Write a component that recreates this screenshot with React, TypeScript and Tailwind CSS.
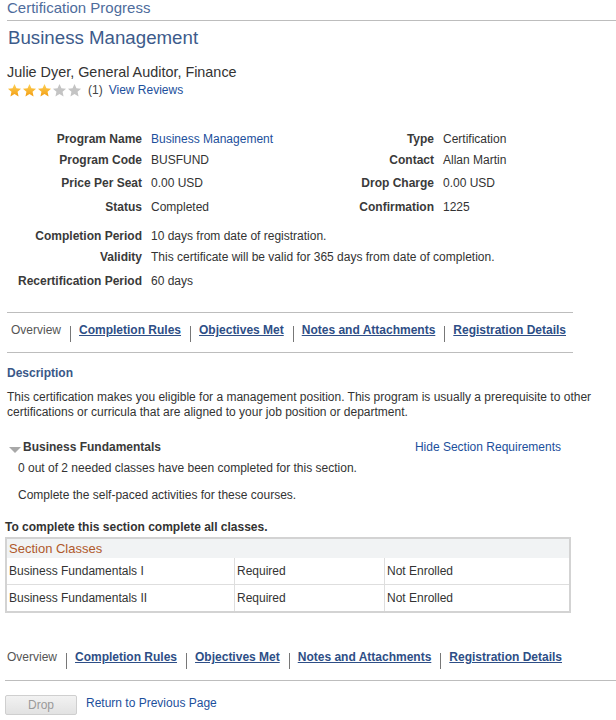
import React from "react"

const font = { fontFamily: '"Liberation Sans", Arial, sans-serif' }

function Star({ on }: { on: boolean }) {
  return (
    <svg width="15" height="15" viewBox="0 0 24 24" className="shrink-0">
      <defs>
        <linearGradient id="gold" x1="0" y1="0" x2="0" y2="1">
          <stop offset="0" stopColor="#ffd257" />
          <stop offset="1" stopColor="#f29d12" />
        </linearGradient>
      </defs>
      <polygon
        points="12,1.5 15.1,8.3 22.5,9 16.9,14 18.5,21.5 12,17.7 5.5,21.5 7.1,14 1.5,9 8.9,8.3"
        fill={on ? "url(#gold)" : "#c4c4c4"}
      />
    </svg>
  )
}

function Tabs() {
  const links = ["Completion Rules", "Objectives Met", "Notes and Attachments", "Registration Details"]
  return (
    <div className="flex items-start text-[12px] leading-[14px]">
      <span className="text-[#555]">Overview</span>
      {links.map((l) => (
        <React.Fragment key={l}>
          <span className="ml-[9px] mr-[8px] mt-[3px] w-px h-[16px] bg-[#777]" />
          <a href="#" className="font-bold underline text-[#2e4e86]">
            {l}
          </a>
        </React.Fragment>
      ))}
    </div>
  )
}

export default function App() {
  const details = [
    ["Program Name", "Business Management", "Type", "Certification", "h-[21px]"],
    ["Program Code", "BUSFUND", "Contact", "Allan Martin", "h-[22px]"],
    ["Price Per Seat", "0.00 USD", "Drop Charge", "0.00 USD", "h-[24px]"],
    ["Status", "Completed", "Confirmation", "1225", "h-[23px]"],
  ]
  const extra = [
    ["Completion Period", "10 days from date of registration.", "h-[20px]"],
    ["Validity", "This certificate will be valid for 365 days from date of completion.", "h-[22px]"],
    ["Recertification Period", "60 days", "h-[26px]"],
  ]

  return (
    <div className="w-[616px] min-h-[720px] bg-white text-[#333] overflow-hidden" style={font}>
      {/* Page header */}
      <div className="ml-[7px] h-[21px] border-b border-[#bdbdbd] text-[15px] leading-[16px] text-[#4e6c9c]">
        Certification Progress
      </div>
      <h1 className="ml-[8px] mt-[5px] text-[18.7px] leading-[24px] text-[#3d5b8b]">Business Management</h1>
      <div className="ml-[7px] mt-[13px] text-[14.4px] leading-[18px] text-[#333]">Julie Dyer, General Auditor, Finance</div>
      <div className="ml-[7px] mt-[1px] flex items-center h-[16px] text-[12px]">
        <Star on />
        <Star on />
        <Star on />
        <Star on={false} />
        <Star on={false} />
        <span className="ml-[6px] text-[#444]">(1)</span>
        <a href="#" className="ml-[6px] text-[#1c4f9c]">View Reviews</a>
      </div>

      {/* Details */}
      <div className="mt-[30px] grid grid-cols-[142px_180px_94px_auto] gap-x-[9px] text-[12px] leading-[14px]">
        {details.map(([l1, v1, l2, v2, h]) => (
          <React.Fragment key={l1}>
            <div className={`${h} flex items-center justify-end font-bold text-[#3a3a3a]`}>{l1}</div>
            <div className={`${h} flex items-center ${l1 === "Program Name" ? "text-[#1c4f9c]" : ""}`}>{v1}</div>
            <div className={`${h} flex items-center justify-end font-bold text-[#3a3a3a]`}>{l2}</div>
            <div className={`${h} flex items-center`}>{v2}</div>
          </React.Fragment>
        ))}
        <div className="col-span-4 h-[8px]" />
        {extra.map(([l, v, h]) => (
          <React.Fragment key={l}>
            <div className={`${h} flex items-center justify-end font-bold text-[#3a3a3a]`}>{l}</div>
            <div className={`${h} col-span-3 flex items-center`}>{v}</div>
          </React.Fragment>
        ))}
      </div>

      {/* Top tabs */}
      <div className="ml-[7px] mt-[18px] w-[566px] h-[41px] border-y border-[#bdbdbd] pl-[4px] pt-[10px]">
        <Tabs />
      </div>

      {/* Description */}
      <div className="ml-[7px] mt-[13px] text-[12px] leading-[14px] font-bold text-[#3a5888]">Description</div>
      <p className="ml-[7px] mt-[10px] text-[12px] leading-[15px] text-[#333]">
        This certification makes you eligible for a management position. This program is usually a prerequisite to other certifications or curricula that are aligned to your job position or department.
      </p>

      {/* Section */}
      <div className="mt-[20px] w-[561px] flex items-center justify-between text-[12px] leading-[14px]">
        <div className="flex items-center">
          <svg width="12" height="7" viewBox="0 0 12 7" className="ml-[9px] mt-[6px]">
            <polygon points="0,0 12,0 6,6" fill="#a8a8a8" />
          </svg>
          <span className="ml-[2px] font-bold text-[#3a3a3a]">Business Fundamentals</span>
        </div>
        <a href="#" className="text-[#1c4f9c]">Hide Section Requirements</a>
      </div>
      <div className="ml-[18px] mt-[7px] text-[12px] leading-[14px]">0 out of 2 needed classes have been completed for this section.</div>
      <div className="ml-[18px] mt-[13px] text-[12px] leading-[14px]">Complete the self-paced activities for these courses.</div>

      <div className="ml-[5px] mt-[18px] text-[12px] leading-[14px] font-bold text-[#333]">To complete this section complete all classes.</div>

      {/* Table */}
      <div className="ml-[5px] mt-[3px] w-[566px] border-2 border-[#d3d3d3] text-[12px]">
        <div className="h-[19px] bg-[#f1f3f4] flex items-center pl-[2px] text-[13px] text-[#b0592b]">Section Classes</div>
        {[
          ["Business Fundamentals I", "h-[26px]"],
          ["Business Fundamentals II", "h-[27px] border-t border-[#dedede]"],
        ].map(([n, h]) => (
          <div key={n} className={`grid grid-cols-[227px_150px_1fr] bg-white ${h}`}>
            <div className="flex items-center pl-[2px]">{n}</div>
            <div className="flex items-center pl-[2px] border-l border-[#dedede]">Required</div>
            <div className="flex items-center pl-[2px] border-l border-[#dedede]">Not Enrolled</div>
          </div>
        ))}
      </div>

      {/* Bottom tabs */}
      <div className="ml-[5px] mt-[37px] h-[31px] border-b border-[#bdbdbd] pl-[2px]">
        <Tabs />
      </div>

      {/* Footer */}
      <div className="mt-[14px] flex items-start text-[12px]">
        <button className="ml-[5px] w-[72px] h-[20px] border border-[#cfcfcf] rounded-[2px] bg-gradient-to-b from-[#f2f2f2] to-[#e2e2e2] text-[#9a9a9a] text-[12px]">
          Drop
        </button>
        <a href="#" className="ml-[9px] mt-[1px] leading-[14px] text-[#1c4f9c]">Return to Previous Page</a>
      </div>
    </div>
  )
}
